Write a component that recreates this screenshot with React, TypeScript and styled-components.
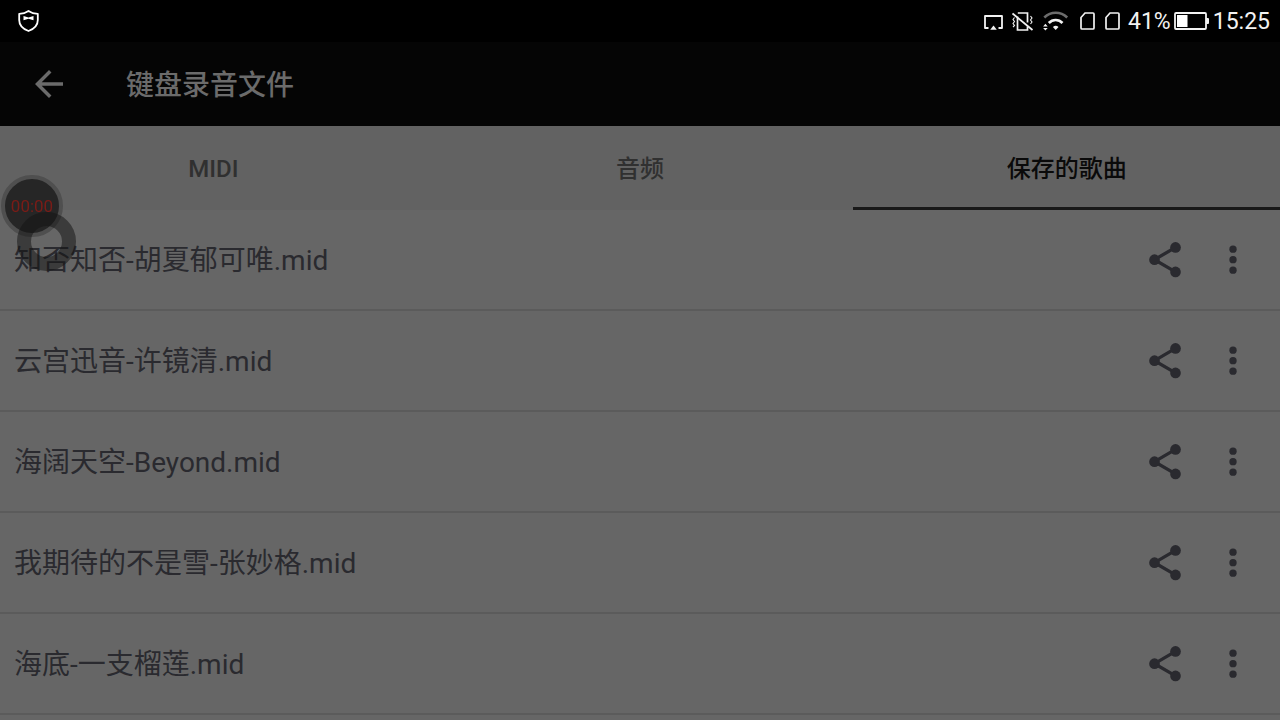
import React from "react";
import styled, { createGlobalStyle } from "styled-components";

const GlobalStyle = createGlobalStyle`
  *, *::before, *::after { box-sizing: border-box; }
  html, body { margin: 0; padding: 0; }
  body {
    background: #666666;
    font-family: Roboto, "Noto Sans CJK SC", sans-serif;
    overflow: hidden;
  }
  button {
    margin: 0;
    padding: 0;
    border: 0;
    background: none;
    color: inherit;
    font: inherit;
    cursor: pointer;
  }
`;

const Page = styled.div`
  display: flex;
  flex-direction: column;
  min-height: 100vh;
`;

const StatusBar = styled.div`
  display: flex;
  align-items: center;
  justify-content: space-between;
  height: 42px;
  padding: 0 10px 0 18px;
  background: #000000;
  color: #f2f2f2;
`;

const StatusGroup = styled.div`
  display: flex;
  align-items: center;
  gap: 8px;
`;

const PowerGroup = styled.div`
  display: flex;
  align-items: center;
  gap: 3px;
`;

const StatusText = styled.span`
  padding-top: 2px;
  font-size: 23px;
  line-height: 28px;
`;

const Glyph = styled.svg`
  display: block;
  flex: none;
`;

const Toolbar = styled.header`
  display: flex;
  align-items: center;
  gap: 56px;
  height: 84px;
  padding: 0 28px;
  background: #050505;
  color: #6b6b6b;
`;

const Title = styled.h1`
  margin: 0;
  padding-top: 4px;
  font-size: 28px;
  line-height: 40px;
  font-weight: 500;
`;

const IconButton = styled.button`
  display: flex;
  flex: none;
  width: 42px;
  height: 42px;
`;

const Tabs = styled.div`
  display: grid;
  grid-template-columns: repeat(3, 1fr);
  height: 84px;
  background: #626262;
`;

const Tab = styled.button<{ $active: boolean }>`
  && {
    padding-top: 5px;
    border-bottom: 3px solid ${(p) => (p.$active ? "#191919" : "transparent")};
    color: ${(p) => (p.$active ? "#0a0a0a" : "#303030")};
    font-size: 24px;
    line-height: 32px;
    font-weight: 500;
  }
`;

const SongList = styled.ul`
  margin: 0;
  padding: 0;
  list-style: none;
`;

const SongRow = styled.li`
  display: flex;
  align-items: center;
  gap: 26px;
  height: 101px;
  padding: 0 26px 0 14px;
  border-bottom: 2px solid #5b5b5b;
  color: #2a2a2f;
`;

const SongName = styled.span`
  flex: 1;
  min-width: 0;
  padding-top: 3px;
  overflow: hidden;
  white-space: nowrap;
  text-overflow: ellipsis;
  font-size: 28px;
  line-height: 40px;
`;

const Recorder = styled.div`
  position: fixed;
  top: 175px;
  left: 1px;
  width: 76px;
  height: 96px;
`;

const RecorderTimer = styled.button`
  && {
    position: absolute;
    top: 0;
    left: 0;
    width: 62px;
    height: 62px;
    border: 4px solid #4f4f4f;
    border-radius: 50%;
    background: #262626;
    color: #7a1c17;
    font-size: 17px;
    line-height: 24px;
    text-align: center;
  }
`;

const RecorderRing = styled.div`
  position: absolute;
  top: 37px;
  left: 16px;
  width: 59px;
  height: 59px;
  border: 14px solid rgba(20, 20, 20, 0.52);
  border-radius: 50%;
  pointer-events: none;
`;

const ShieldIcon = () => (
  <Glyph width="22" height="24" viewBox="0 0 22 24" fill="none" aria-hidden="true">
    <path
      d="M10.5 2C8 3.800 4.500 4.700 1.200 4.800V11C1.200 16 5 20 10.500 22C16 20 19.800 16 19.800 11V4.800C16.500 4.700 13 3.800 10.500 2Z"
      stroke="#fff"
      strokeWidth="1.800"
      strokeLinejoin="round"
    />
    <path d="M5.500 7L10.500 8.400L15.500 7V11.200L10.500 9.800L5.500 11.200Z" fill="#fff" />
  </Glyph>
);

const CastIcon = () => (
  <Glyph width="20" height="20" viewBox="0 0 20 20" fill="none" aria-hidden="true">
    <path d="M4.500 17H1V5H18V17H14.500" stroke="#f2f2f2" strokeWidth="1.800" strokeLinejoin="round" />
    <path d="M9.500 14.500L12.800 18.800H6.200Z" fill="#f2f2f2" />
  </Glyph>
);

const VibrateOffIcon = () => (
  <Glyph width="22" height="20" viewBox="0 0 22 20" fill="none" stroke="#f2f2f2" aria-hidden="true">
    <path d="M5.500 5.500V19H15.500V15.500M15.500 11.500V2H5.800" strokeWidth="1.700" />
    <path d="M0.500 2.500L20.500 19" strokeWidth="1.800" />
    <path
      d="M2.500 6.500L1 8.500L2.500 10.500L1 12.500L2.500 14.500L1 16M18.500 5L20 7L18.500 9L20 11L18.500 13"
      strokeWidth="1.100"
    />
  </Glyph>
);

const WifiIcon = () => (
  <Glyph width="28" height="20" viewBox="0 0 28 20" fill="none" aria-hidden="true">
    <path d="M2.300 6.500C9 0.200 18.500 0.200 25.200 6.500" stroke="#6c6c6c" strokeWidth="2.600" />
    <path d="M6.800 12C10.500 8 16.800 8 20.500 12" stroke="#f2f2f2" strokeWidth="2.600" />
    <path d="M10.900 16Q13.700 13.700 16.500 16L13.700 19Z" fill="#f2f2f2" />
    <path d="M3.400 12.800L5.700 15.400H1.100ZM3.400 19.500L5.700 16.900H1.100Z" fill="#f2f2f2" />
  </Glyph>
);

const SimIcon = () => (
  <Glyph width="17" height="20" viewBox="0 0 17 20" fill="none" aria-hidden="true">
    <path
      d="M7 2H15Q16 2 16 3V17Q16 18 15 18H4Q3 18 3 17V6.500Z"
      stroke="#f2f2f2"
      strokeWidth="1.700"
    />
  </Glyph>
);

const BatteryIcon = () => (
  <Glyph width="36" height="20" viewBox="0 0 36 20" fill="none" aria-hidden="true">
    <rect x="1" y="2" width="31" height="16" rx="1" stroke="#f2f2f2" strokeWidth="1.800" />
    <rect x="3" y="4" width="10.500" height="12" fill="#fff" />
    <rect x="32" y="7" width="3" height="6" rx="1" fill="#f2f2f2" />
  </Glyph>
);

const BackIcon = () => (
  <Glyph width="42" height="42" viewBox="0 0 24 24" fill="currentColor" aria-hidden="true">
    <path d="M20 11H7.830l5.590-5.590L12 4l-8 8 8 8 1.410-1.410L7.830 13H20v-2z" />
  </Glyph>
);

const ShareIcon = () => (
  <Glyph width="42" height="42" viewBox="0 0 24 24" fill="currentColor" aria-hidden="true">
    <path d="M18 4.800L6 11.800L18 18.800" fill="none" stroke="currentColor" strokeWidth="1.900" />
    <circle cx="18" cy="4.800" r="3.050" />
    <circle cx="6" cy="11.800" r="3.050" />
    <circle cx="18" cy="18.800" r="3.050" />
  </Glyph>
);

const MoreIcon = () => (
  <Glyph width="42" height="42" viewBox="0 0 24 24" fill="currentColor" aria-hidden="true">
    <circle cx="12" cy="5.800" r="2.100" />
    <circle cx="12" cy="11.800" r="2.100" />
    <circle cx="12" cy="17.800" r="2.100" />
  </Glyph>
);

const tabs = ["MIDI", "音频", "保存的歌曲"];

const songs = [
  "知否知否-胡夏郁可唯.mid",
  "云宫迅音-许镜清.mid",
  "海阔天空-Beyond.mid",
  "我期待的不是雪-张妙格.mid",
  "海底-一支榴莲.mid",
];

export default function App() {
  const [active, setActive] = React.useState(2);

  return (
    <Page lang="zh-CN">
      <GlobalStyle />
      <StatusBar>
        <ShieldIcon />
        <StatusGroup>
          <CastIcon />
          <VibrateOffIcon />
          <WifiIcon />
          <SimIcon />
          <SimIcon />
          <PowerGroup>
            <StatusText>41%</StatusText>
            <BatteryIcon />
            <StatusText>15:25</StatusText>
          </PowerGroup>
        </StatusGroup>
      </StatusBar>
      <Toolbar>
        <IconButton type="button" aria-label="返回">
          <BackIcon />
        </IconButton>
        <Title>键盘录音文件</Title>
      </Toolbar>
      <Tabs role="tablist">
        {tabs.map((label, i) => (
          <Tab
            key={label}
            type="button"
            role="tab"
            aria-selected={i === active}
            $active={i === active}
            onClick={() => setActive(i)}
          >
            {label}
          </Tab>
        ))}
      </Tabs>
      <SongList>
        {songs.map((name) => (
          <SongRow key={name}>
            <SongName>{name}</SongName>
            <IconButton type="button" aria-label="分享">
              <ShareIcon />
            </IconButton>
            <IconButton type="button" aria-label="更多">
              <MoreIcon />
            </IconButton>
          </SongRow>
        ))}
      </SongList>
      <Recorder>
        <RecorderTimer type="button">00:00</RecorderTimer>
        <RecorderRing />
      </Recorder>
    </Page>
  );
}
